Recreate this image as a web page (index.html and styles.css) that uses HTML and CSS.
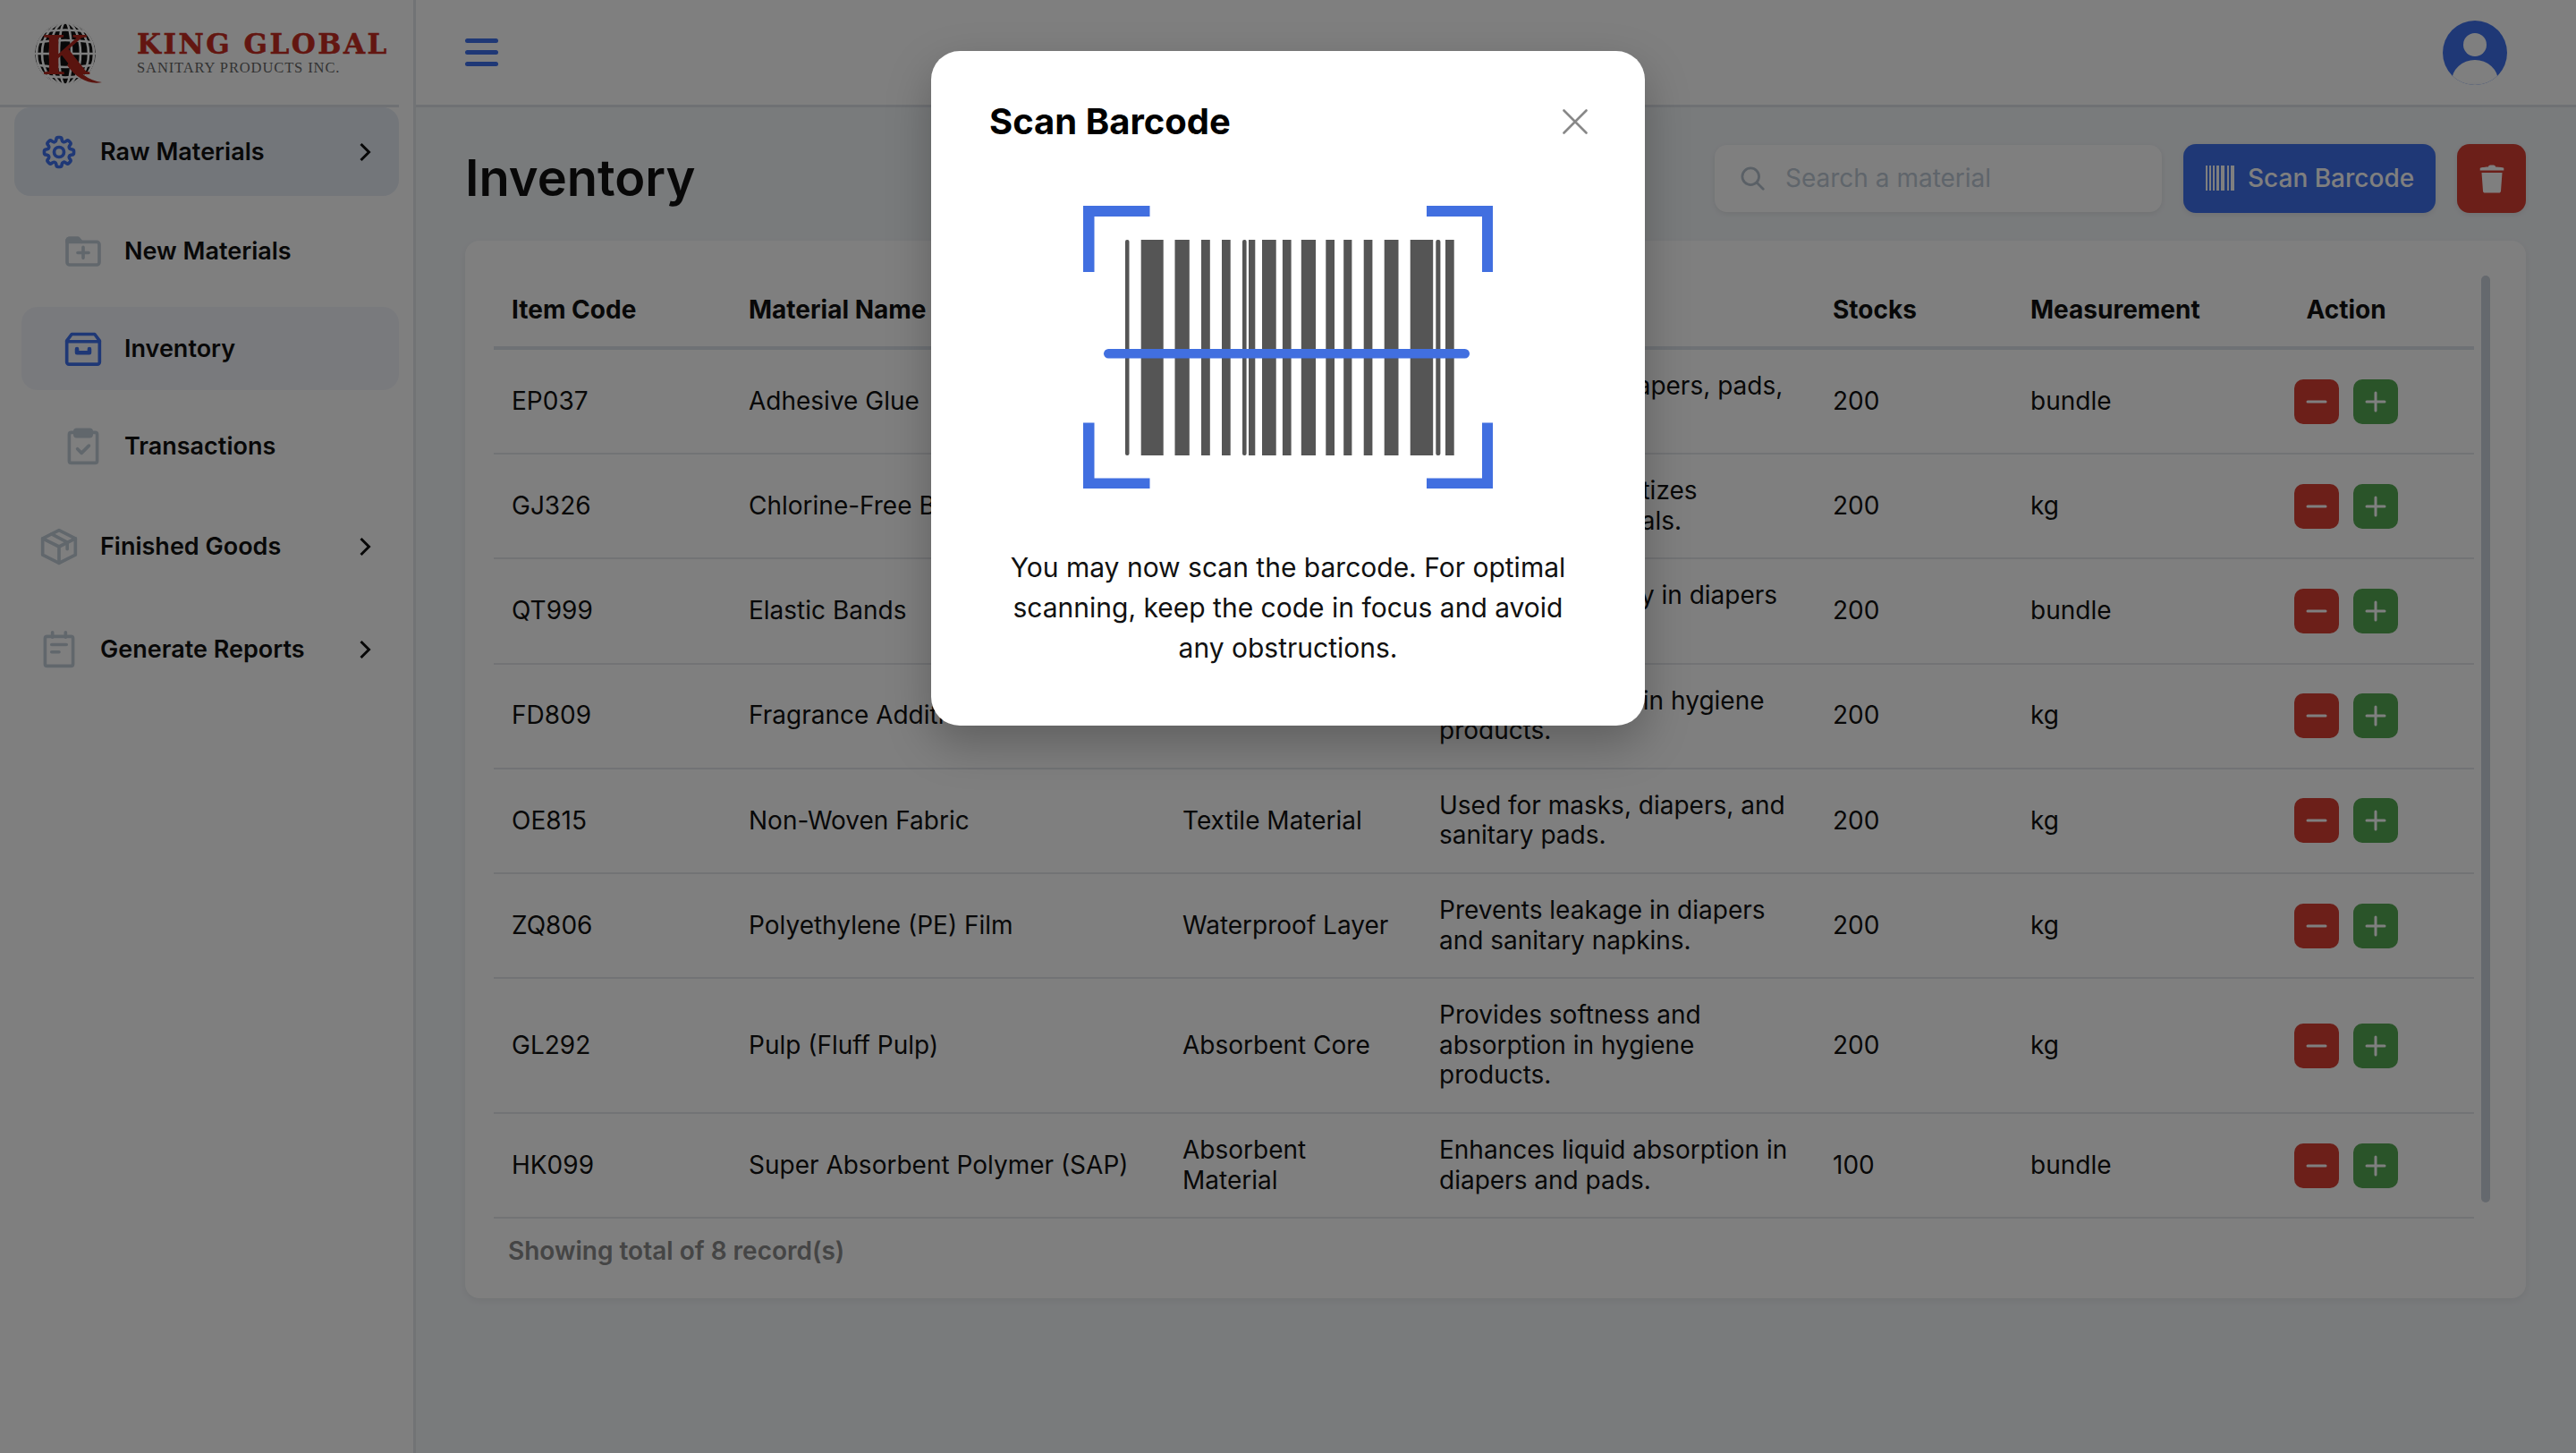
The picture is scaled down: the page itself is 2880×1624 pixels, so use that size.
FILE: index.html
```html
<!DOCTYPE html>
<html lang="en">
<head>
<meta charset="utf-8">
<title>Inventory</title>
<link rel="stylesheet" href="styles.css">
</head>
<body>
<div class="app">
  <aside class="sidebar">
    <div class="brand">
      <svg class="globe" viewBox="0 0 80 76">
        <defs><clipPath id="gc"><circle cx="38" cy="37" r="34"/></clipPath></defs>
        <g clip-path="url(#gc)">
          <circle cx="38" cy="37" r="34" fill="#111"/>
          <g fill="none" stroke="#fff" stroke-width="2.6">
            <ellipse cx="38" cy="37" rx="7" ry="35"/>
            <ellipse cx="38" cy="37" rx="17" ry="35"/>
            <ellipse cx="38" cy="37" rx="26" ry="35"/>
            <ellipse cx="38" cy="37" rx="32" ry="35"/>
            <path d="M0 37H76"/>
            <path d="M2 25Q38 19 74 25"/>
            <path d="M6 14Q38 7 70 14"/>
            <path d="M14 5Q38 -1 62 5"/>
            <path d="M2 49Q38 55 74 49"/>
            <path d="M6 60Q38 67 70 60"/>
            <path d="M14 69Q38 75 62 69"/>
          </g>
        </g>
        <text class="globe-k" x="13" y="60">K</text>
        <path class="globe-tail" d="M44 44C52 58 64 67 79 69C64 72 50 64 40 50Z"/>
      </svg>
      <div class="brand-text">
        <div class="brand-name">KING GLOBAL</div>
        <div class="brand-sub">SANITARY PRODUCTS INC.</div>
      </div>
    </div>
    <nav class="menu">
      <a class="menu-item is-open">
        <svg class="ico ico-blue" viewBox="0 0 24 24"><path d="M10.343 3.94c.09-.542.56-.94 1.11-.94h1.093c.55 0 1.02.398 1.11.94l.149.894c.07.424.384.764.78.93.398.164.855.142 1.205-.108l.737-.527a1.125 1.125 0 0 1 1.45.12l.773.774c.39.389.44 1.002.12 1.45l-.527.737c-.25.35-.272.806-.107 1.204.165.397.505.71.93.78l.893.15c.543.09.94.559.94 1.109v1.094c0 .55-.397 1.02-.94 1.11l-.894.149c-.424.07-.764.383-.929.78-.165.398-.143.854.107 1.204l.527.738c.32.447.269 1.06-.12 1.45l-.774.773a1.125 1.125 0 0 1-1.449.12l-.738-.527c-.35-.25-.806-.272-1.203-.107-.398.165-.71.505-.781.929l-.149.894c-.09.542-.56.94-1.11.94h-1.094c-.55 0-1.019-.398-1.11-.94l-.148-.894c-.071-.424-.384-.764-.781-.93-.398-.164-.854-.142-1.204.108l-.738.527c-.447.32-1.06.269-1.45-.12l-.773-.774a1.125 1.125 0 0 1-.12-1.45l.527-.737c.25-.35.272-.806.108-1.204-.165-.397-.506-.71-.93-.78l-.894-.15c-.542-.09-.94-.56-.94-1.109v-1.094c0-.55.398-1.02.94-1.11l.894-.149c.424-.07.765-.383.93-.78.165-.398.143-.854-.108-1.204l-.526-.738a1.125 1.125 0 0 1 .12-1.45l.773-.773a1.125 1.125 0 0 1 1.45-.12l.737.527c.35.25.807.272 1.204.107.397-.165.71-.505.78-.929l.15-.894Z"/><circle cx="12" cy="12" r="3"/></svg>
        <span class="menu-label">Raw Materials</span>
        <svg class="chev" viewBox="0 0 24 24"><path d="M7.500 3l9 9-9 9"/></svg>
      </a>
      <div class="submenu">
        <a class="sub-item">
          <svg class="ico" viewBox="0 0 24 24"><path d="M2.200 5.500A1.500 1.500 0 0 1 3.700 4h5.200l2 2.200h9.400a1.500 1.500 0 0 1 1.500 1.500v11a1.500 1.500 0 0 1-1.500 1.500H3.700a1.500 1.500 0 0 1-1.500-1.500Z"/><path class="solid" d="M2.200 5.500A1.500 1.500 0 0 1 3.700 4h5.200l2 2.200h-8.700Z"/><path d="M12 9.500v6.500M8.700 12.800h6.600"/></svg>
          <span>New Materials</span>
        </a>
        <a class="sub-item is-active">
          <svg class="ico ico-blue" viewBox="0 0 24 24"><path d="M5 3h14l3 4v13a1.300 1.300 0 0 1-1.300 1.300H3.300A1.300 1.300 0 0 1 2 20V7Z"/><path d="M2 7.500h20"/><path class="thick" d="M8.200 12v2.300h7.600V12"/></svg>
          <span>Inventory</span>
        </a>
        <a class="sub-item">
          <svg class="ico" viewBox="0 0 24 24"><rect x="3.500" y="3.500" width="17" height="18.500" rx="1.200"/><rect class="solid" x="7" y="1.800" width="10" height="4" rx="1"/><path d="m8.500 13.500 2.500 2.500 4.500-4.500"/></svg>
          <span>Transactions</span>
        </a>
      </div>
      <a class="menu-item">
        <svg class="ico" viewBox="0 0 24 24"><path d="M12 2 22 7v10l-10 5-10-5V7Z"/><path d="M2 7l10 5 10-5M12 12v10"/><path d="M7.500 4.300 17 9.300v4.200"/></svg>
        <span class="menu-label">Finished Goods</span>
        <svg class="chev" viewBox="0 0 24 24"><path d="M7.500 3l9 9-9 9"/></svg>
      </a>
      <a class="menu-item">
        <svg class="ico" viewBox="0 0 24 24"><rect x="3.500" y="4" width="17" height="18" rx="1.200"/><path d="M8 1.500v3M16 1.500v3M7.500 9h9M7.500 13.500h4.500"/></svg>
        <span class="menu-label">Generate Reports</span>
        <svg class="chev" viewBox="0 0 24 24"><path d="M7.500 3l9 9-9 9"/></svg>
      </a>
    </nav>
  </aside>

  <div class="main">
    <header class="topbar">
      <div class="burger"><span></span><span></span><span></span></div>
      <svg class="avatar" viewBox="0 0 72 72">
        <defs>
          <clipPath id="ac"><circle cx="36" cy="36" r="36"/></clipPath>
          <linearGradient id="ag" x1="0" y1="0" x2="0" y2="1"><stop offset="0.5" stop-color="#fff"/><stop offset="1" stop-color="#c3cfea"/></linearGradient>
        </defs>
        <circle cx="36" cy="36" r="36" fill="#3f71ec"/>
        <circle cx="36" cy="27" r="13" fill="#fff"/>
        <ellipse clip-path="url(#ac)" cx="36" cy="68" rx="26" ry="24" fill="url(#ag)"/>
      </svg>
    </header>
    <main class="content">
      <div class="title-row">
        <h1 class="title">Inventory</h1>
        <div class="tools">
          <div class="search">
            <svg class="search-ico" viewBox="0 0 24 24"><circle cx="10.500" cy="10.500" r="8"/><path d="m16.500 16.500 6 6"/></svg>
            <span>Search a material</span>
          </div>
          <button class="btn-scan">
            <svg class="scan-ico" viewBox="0 0 32 28"><path d="M0 0h2v28H0zM4 0h2v28H4zM8 0h2v28H8zM12 0h3v28h-3zM17 0h4v28h-4zM24 0h2v28h-2zM28 0h4v28h-4z"/></svg>
            <span>Scan Barcode</span>
          </button>
          <button class="btn-trash">
            <svg class="trash-ico" viewBox="0 0 28 32"><path d="M10 2.500C10 1 11 .5 14 .5s4 .5 4 2c5 .3 9 .7 9.300 1.500v2.500H.7V4C1 3.200 5 2.800 10 2.500Z"/><path d="M2.500 9h23L24 29.500c-.1 1.400-1 2-2.200 2H6.200c-1.200 0-2.100-.6-2.200-2Z"/></svg>
          </button>
        </div>
      </div>
      <section class="card">
        <div class="table-wrap">
          <table class="tbl">
            <colgroup>
              <col class="c1"><col class="c2"><col class="c3"><col class="c4"><col class="c5"><col class="c6"><col class="c7">
            </colgroup>
            <thead>
              <tr><th>Item Code</th><th>Material Name</th><th>Category</th><th>Description</th><th>Stocks</th><th>Measurement</th><th class="center">Action</th></tr>
            </thead>
            <tbody>
              <tr><td>EP037</td><td>Adhesive Glue</td><td>Bonding Agent</td><td>Joins layers in diapers, pads, and more.</td><td>200</td><td>bundle</td><td><div class="acts"><button class="act act-minus"><svg viewBox="0 0 24 24"><path d="M2 12h20"/></svg></button><button class="act act-plus"><svg viewBox="0 0 24 24"><path d="M2 12h20M12 2v20"/></svg></button></div></td></tr>
              <tr><td>GJ326</td><td>Chlorine-Free Bleach</td><td>Whitening Agent</td><td>Whitens and sanitizes absorbent materials.</td><td>200</td><td>kg</td><td><div class="acts"><button class="act act-minus"><svg viewBox="0 0 24 24"><path d="M2 12h20"/></svg></button><button class="act act-plus"><svg viewBox="0 0 24 24"><path d="M2 12h20M12 2v20"/></svg></button></div></td></tr>
              <tr><td>QT999</td><td>Elastic Bands</td><td>Stretch Material</td><td>Provides elasticity in diapers and pads.</td><td>200</td><td>bundle</td><td><div class="acts"><button class="act act-minus"><svg viewBox="0 0 24 24"><path d="M2 12h20"/></svg></button><button class="act act-plus"><svg viewBox="0 0 24 24"><path d="M2 12h20M12 2v20"/></svg></button></div></td></tr>
              <tr><td>FD809</td><td>Fragrance Additive</td><td>Odor Control</td><td>Adds fragrances in hygiene products.</td><td>200</td><td>kg</td><td><div class="acts"><button class="act act-minus"><svg viewBox="0 0 24 24"><path d="M2 12h20"/></svg></button><button class="act act-plus"><svg viewBox="0 0 24 24"><path d="M2 12h20M12 2v20"/></svg></button></div></td></tr>
              <tr><td>OE815</td><td>Non-Woven Fabric</td><td>Textile Material</td><td>Used for masks, diapers, and sanitary pads.</td><td>200</td><td>kg</td><td><div class="acts"><button class="act act-minus"><svg viewBox="0 0 24 24"><path d="M2 12h20"/></svg></button><button class="act act-plus"><svg viewBox="0 0 24 24"><path d="M2 12h20M12 2v20"/></svg></button></div></td></tr>
              <tr><td>ZQ806</td><td>Polyethylene (PE) Film</td><td>Waterproof Layer</td><td>Prevents leakage in diapers and sanitary napkins.</td><td>200</td><td>kg</td><td><div class="acts"><button class="act act-minus"><svg viewBox="0 0 24 24"><path d="M2 12h20"/></svg></button><button class="act act-plus"><svg viewBox="0 0 24 24"><path d="M2 12h20M12 2v20"/></svg></button></div></td></tr>
              <tr><td>GL292</td><td>Pulp (Fluff Pulp)</td><td>Absorbent Core</td><td>Provides softness and absorption in hygiene products.</td><td>200</td><td>kg</td><td><div class="acts"><button class="act act-minus"><svg viewBox="0 0 24 24"><path d="M2 12h20"/></svg></button><button class="act act-plus"><svg viewBox="0 0 24 24"><path d="M2 12h20M12 2v20"/></svg></button></div></td></tr>
              <tr><td>HK099</td><td>Super Absorbent Polymer (SAP)</td><td>Absorbent Material</td><td>Enhances liquid absorption in diapers and pads.</td><td>100</td><td>bundle</td><td><div class="acts"><button class="act act-minus"><svg viewBox="0 0 24 24"><path d="M2 12h20"/></svg></button><button class="act act-plus"><svg viewBox="0 0 24 24"><path d="M2 12h20M12 2v20"/></svg></button></div></td></tr>
            </tbody>
          </table>
          <div class="thumb"></div>
        </div>
        <div class="records">Showing total of 8 record(s)</div>
      </section>
    </main>
  </div>
</div>

<div class="overlay">
  <div class="modal" role="dialog">
    <div class="modal-head">
      <h2 class="modal-title">Scan Barcode</h2>
      <svg class="close" viewBox="0 0 28 28"><path d="M1.500 1.500l25 25M26.500 1.500l-25 25"/></svg>
    </div>
    <svg class="barcode" viewBox="1211 230 458 316">
      <g class="bars">
        <rect x="1258" y="268" width="4.500" height="241" rx="2"/>
        <rect x="1275.700" y="268" width="25" height="241"/>
        <rect x="1313.500" y="268" width="16.300" height="241"/>
        <rect x="1343" y="268" width="9.800" height="241"/>
        <rect x="1366" y="268" width="9.700" height="241"/>
        <rect x="1389" y="268" width="4.600" height="241" rx="2"/>
        <rect x="1396" y="268" width="7.300" height="241"/>
        <rect x="1411" y="268" width="15.700" height="241"/>
        <rect x="1433.900" y="268" width="9.700" height="241"/>
        <rect x="1454.800" y="268" width="16.200" height="241"/>
        <rect x="1482.300" y="268" width="9.700" height="241"/>
        <rect x="1502.200" y="268" width="9.200" height="241"/>
        <rect x="1524.700" y="268" width="9.700" height="241"/>
        <rect x="1547.700" y="268" width="15.800" height="241"/>
        <rect x="1576.700" y="268" width="25.500" height="241"/>
        <rect x="1605.300" y="268" width="5.100" height="241" rx="2"/>
        <rect x="1616" y="268" width="9.700" height="241"/>
      </g>
      <g class="scan-marks">
        <rect x="1234" y="390" width="409" height="10.500" rx="5.200"/>
        <path d="M1211 230h74.500v12H1223.500v62H1211Z"/>
        <path d="M1669.500 230h-74.500v12h62v62h12.500Z"/>
        <path d="M1211 546.500h74.500v-12H1223.500v-62H1211Z"/>
        <path d="M1669.500 546.500h-74.500v-12h62v-62h12.500Z"/>
      </g>
    </svg>
    <p class="modal-text">You may now scan the barcode. For optimal scanning, keep the code in focus and avoid any obstructions.</p>
  </div>
</div>
</body>
</html>
```

FILE: styles.css
```css
* { box-sizing: border-box; }
html, body { margin: 0; padding: 0; }
body {
  width: 2880px;
  height: 1624px;
  overflow: hidden;
  font-family: Inter, "Liberation Sans", sans-serif;
  color: #111;
  background: #f3f6f9;
  position: relative;
}
.app { display: flex; height: 1624px; }

/* sidebar */
.sidebar {
  width: 465px;
  flex: none;
  background: #fff;
  border-right: 3px solid #e2e6eb;
  padding-right: 16px;
}
.brand {
  height: 120px;
  border-bottom: 3px solid #dfe3e8;
  display: flex;
  align-items: center;
  padding-left: 35px;
  gap: 40px;
}
.globe { width: 80px; height: 76px; flex: none; margin-right: -2px; margin-top: 4px; }
.globe-k { font-family: "Liberation Serif", serif; font-weight: 700; font-size: 68px; fill: #b5291f; }
.globe-tail { fill: #b5291f; }
.brand-text { display: flex; flex-direction: column; }
.brand-name {
  font-family: "DejaVu Serif", serif;
  font-weight: 700;
  font-size: 31px;
  line-height: 34px;
  letter-spacing: 2.500px;
  color: #c62d22;
  -webkit-text-stroke: .5px #c62d22;
  white-space: nowrap;
}
.brand-sub {
  font-family: "Liberation Serif", serif;
  font-size: 16.500px;
  line-height: 20px;
  letter-spacing: .9px;
  color: #666;
  white-space: nowrap;
}
.menu { padding: 0 0 0 16px; display: flex; flex-direction: column; }
.menu-item {
  height: 99px;
  display: flex;
  align-items: center;
  padding: 0 26px 0 31px;
  border-radius: 18px;
  font-size: 27px;
  font-weight: 600;
  margin-bottom: 16px;
}
.menu-item.is-open { background: #e6ecf5; margin-bottom: 15px; }
.menu-label { flex: 1; margin-left: 27px; }
.chev { width: 24px; height: 24px; fill: none; stroke: #111; stroke-width: 3; }
.ico { width: 44px; height: 44px; margin: 0 -3px; flex: none; fill: none; stroke: #c3ced9; stroke-width: 2; stroke-linejoin: round; stroke-linecap: round; }
.ico .solid { fill: #c3ced9; }
.ico .thick { stroke-width: 2.500; }
.ico-blue { stroke: #3f71ec; }
.submenu { display: flex; flex-direction: column; gap: 16px; margin: 0 0 16px 8px; }
.sub-item {
  height: 93px;
  display: flex;
  align-items: center;
  gap: 27px;
  padding-left: 50px;
  border-radius: 18px;
  font-size: 27px;
  font-weight: 600;
}
.sub-item.is-active { background: #f3f5fb; }

/* top bar */
.main { flex: 1; min-width: 0; display: flex; flex-direction: column; }
.topbar {
  height: 120px;
  background: #fff;
  border-bottom: 3px solid #dfe3e8;
  display: flex;
  align-items: center;
  justify-content: space-between;
  padding: 0 77px 0 55px;
}
.burger { display: flex; flex-direction: column; gap: 8px; width: 37px; }
.burger span { display: block; height: 5px; border-radius: 3px; background: #3f71ec; }
.avatar { width: 72px; height: 72px; }

/* content */
.content { padding: 41px 56px 0 55px; }
.title-row { display: flex; align-items: center; justify-content: space-between; height: 77px; }
.title { margin: 0 0 2px; font-size: 56px; font-weight: 600; line-height: 72px; color: #111; }
.tools { display: flex; align-items: center; }
.search {
  width: 500px;
  height: 75px;
  background: #fff;
  border-radius: 14px;
  box-shadow: 0 2px 6px rgba(0, 0, 0, .08);
  display: flex;
  align-items: center;
  padding: 0 0 1px 28px;
  gap: 23px;
  font-size: 28px;
  color: #bfcad6;
}
.search-ico { width: 28px; height: 28px; fill: none; stroke: #b5c0cc; stroke-width: 2.400; stroke-linecap: round; }
.btn-scan, .btn-trash { border: 0; font-family: inherit; color: #fff; height: 77px; border-radius: 14px; display: flex; align-items: center; box-shadow: 0 2px 6px rgba(0, 0, 0, .08); }
.btn-scan {
  margin-left: 24px;
  width: 282px;
  background: #3f71ec;
  font-size: 28px;
  font-weight: 500;
  padding: 0 0 1px 25px;
  gap: 15px;
}
.scan-ico { width: 32px; height: 28px; fill: #fff; flex: none; }
.btn-trash { margin-left: 24px; width: 77px; background: #d93f33; justify-content: center; padding: 0; }
.trash-ico { width: 28px; height: 32px; fill: #fff; }

.card {
  margin-top: 31px;
  height: 1182px;
  background: #fff;
  border-radius: 16px;
  box-shadow: 0 3px 8px rgba(0, 0, 0, .06);
  padding: 32px 40px 0 32px;
}
.table-wrap { display: flex; align-items: flex-start; gap: 8px; }
.tbl { width: 2214px; flex: none; table-layout: fixed; border-collapse: separate; border-spacing: 0; font-size: 28px; line-height: 33.600px; }
.c1 { width: 266px; } .c2 { width: 485px; } .c3 { width: 287px; } .c4 { width: 440px; } .c5 { width: 221px; } .c6 { width: 229px; } .c7 { width: 286px; }
.tbl th { height: 90px; text-align: left; font-weight: 700; padding: 6px 19px 0; border-bottom: 4px solid #dde3ea; }
.tbl th:first-child, .tbl td:first-child { padding-left: 20px; }
.tbl th.center { text-align: center; }
.tbl td { padding: 24px 19px; border-bottom: 2px solid #e4e7eb; vertical-align: middle; }
.acts { display: flex; justify-content: center; gap: 16px; }
.act { width: 50px; height: 50px; border: 0; padding: 13px; border-radius: 10px; display: block; }
.act svg { display: block; width: 24px; height: 24px; fill: none; stroke: #fff; stroke-width: 3; stroke-linecap: round; }
.act-minus { background: #d93f33; }
.act-plus { background: #54a852; }
.thumb { width: 10px; height: 1036px; margin-top: 7px; border-radius: 5px; background: #cbd2dc; flex: none; }
.records { padding: 19px 16px 0; font-size: 28px; font-weight: 600; line-height: 34px; color: #8a8a8a; }

/* modal */
.overlay {
  position: absolute;
  inset: 0;
  background: rgba(0, 0, 0, .5);
  display: flex;
  justify-content: center;
  align-items: flex-start;
  padding-top: 57px;
}
.modal {
  width: 798px;
  height: 754px;
  background: #fff;
  border-radius: 32px;
  box-shadow: 0 20px 50px rgba(0, 0, 0, .25);
  padding: 55px 64px 0 65px;
  display: flex;
  flex-direction: column;
  align-items: center;
}
.modal-head { width: 100%; height: 48px; display: flex; align-items: center; justify-content: space-between; }
.modal-title { margin: 0; font-size: 40px; font-weight: 700; line-height: 48px; color: #000; }
.close { width: 28px; height: 28px; fill: none; stroke: #888; stroke-width: 2.600; stroke-linecap: round; }
.barcode { width: 458px; height: 316px; margin: 70px 1px 0 0; flex: none; }
.bars { fill: #555; }
.scan-marks { fill: #416fe0; }
.modal-text { margin: 66px 1px 0 0; font-size: 30px; line-height: 45px; text-align: center; color: #111; }
```
